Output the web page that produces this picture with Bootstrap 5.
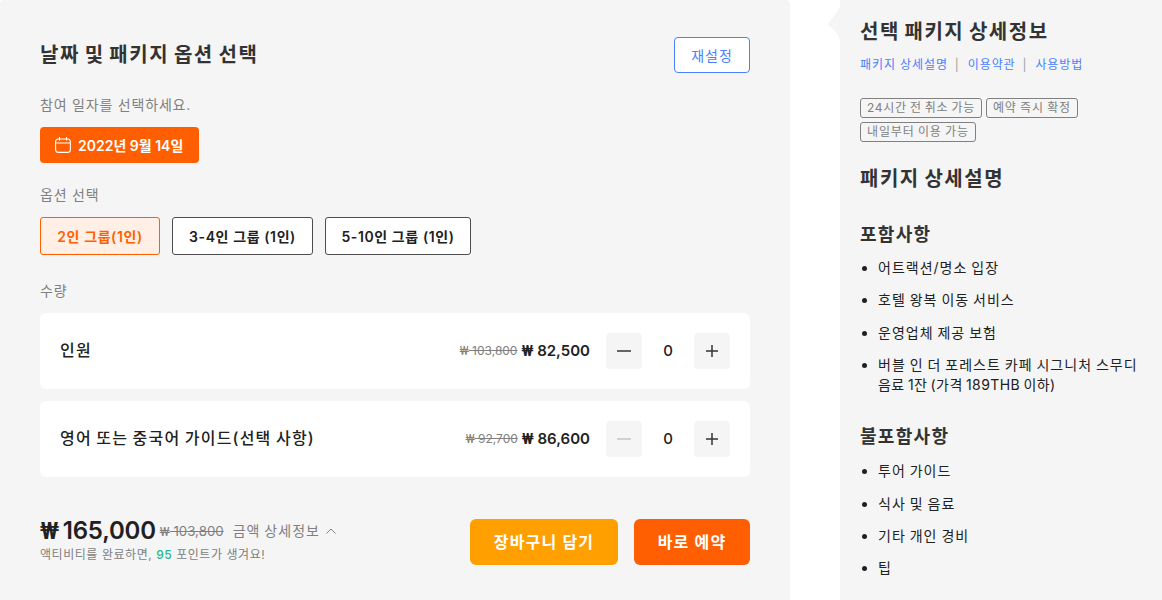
<!DOCTYPE html>
<html lang="ko">
<head>
<meta charset="utf-8">
<title>패키지 옵션</title>
<link rel="stylesheet" href="https://cdn.jsdelivr.net/npm/bootstrap@5.3.0/dist/css/bootstrap.min.css">
<style>
html,body{height:600px;overflow:hidden;background:#fff}
body{font-family:Inter,"Noto Sans CJK KR",sans-serif;color:#212121}
.page-wrap{width:1162px;height:600px;gap:50px;overflow:hidden}
.left-panel{width:790px;height:640px;background:#f5f5f5;border-radius:4px;padding:37px 40px 0;flex:none}
.right-panel{width:322px;height:600px;background:#f5f5f5;padding:19px 20px 0;position:relative;flex:none}
.notch{position:absolute;left:-13px;top:0;width:14px;height:46px;display:block}
.won{font-family:Roboto,sans-serif}
.title-main{font-size:20px;font-weight:700;line-height:36px;margin:0;color:#333;letter-spacing:1.5px;word-spacing:-1.4px}
.reset-btn{width:76px;height:36px;font-size:14px;color:#4a80ff;border:1px solid #4a80ff;background:#fff;border-radius:4px;padding:0;letter-spacing:1px}
.label-text{font-size:14px;line-height:20px;color:#808080;letter-spacing:.8px}
.date-label{margin-top:22px}
.date-btn{height:36px;width:159px;margin-top:12px;background:#ff5f00;color:#fff;border:0;border-radius:4px;font-size:14px;font-weight:600;padding:0 0 0 15px;gap:7px}
.opt-label{margin-top:22px}
.opt-row{margin-top:12px;gap:12px}
.opt-btn{height:38px;background:#fff;border:1px solid #4d4d4d;border-radius:3px;font-size:14px;font-weight:600;color:#212121;padding:0;letter-spacing:.6px}
.opt-active{background:#ffefe5;border-color:#ff5f00;color:#ff5f00}
.opt-a{width:120px}.opt-b{width:141px}.opt-c{width:146px}
.qty-label{margin-top:26px;margin-bottom:12px}
.qty-row{height:76px;background:#fff;border-radius:6px;padding:0 20px}
.qty-gap{margin-top:12px}
.qty-name{font-size:16px;font-weight:500;color:#212121;position:relative;top:-1px;letter-spacing:1.2px;word-spacing:-1px}
.price-old{font-size:12px;color:#808080;text-decoration:line-through}
.price-now{font-size:15px;font-weight:600;color:#212121;margin-left:4px}
.step-btn{width:36px;height:36px;background:#f5f5f5;border:0;border-radius:4px;padding:0}
.step-btn svg{display:block;margin:auto}
.qty-val{width:52px;text-align:center;font-size:15px;font-weight:500;line-height:35px;height:36px}
.foot-row{margin-top:42px;height:46px}
.foot-left{padding-bottom:2px}
.total-line{line-height:24px;height:24px}
.total-now{font-size:24px;font-weight:600;line-height:24px;color:#212121;word-spacing:-2px;letter-spacing:-.2px}
.total-old{font-size:13.3px;color:#808080;text-decoration:line-through;margin-left:4px}
.total-link{font-size:14px;color:#808080;margin-left:9px;letter-spacing:1px;word-spacing:-1px}
.total-link svg{margin-left:5px}
.point-note{font-size:12px;line-height:16px;color:#808080;margin-top:4px;letter-spacing:.55px}
.point-val{color:#1fb88a;font-weight:500}
.cart-btn,.buy-btn{height:46px;border:0;border-radius:6px;color:#fff;font-size:16px;font-weight:700;padding:0;letter-spacing:1.2px}
.cart-btn{width:148px;background:#ff9f00}
.buy-btn{width:116px;background:#ff5f00}
.title-side{font-size:20px;font-weight:700;line-height:26px;color:#333;margin:0;letter-spacing:1.5px;word-spacing:-1.5px}
.side-links{font-size:12px;line-height:18px;margin-top:11px;color:#a0a0a0;letter-spacing:.9px}
.side-links a{color:#4a80ff;text-decoration:none}
.side-links i{font-style:normal;margin:0 8px 0 7px}
.tag-wrap{margin-top:24px;gap:4px;width:260px}
.tag-item{font-size:12px;line-height:18px;height:20px;color:#808080;border:1px solid #808080;border-radius:3px;padding:0 6px;white-space:nowrap;letter-spacing:.85px;word-spacing:-.85px}
.tag-item:first-child{letter-spacing:.68px}
.sub-title{font-size:20px;font-weight:700;line-height:26px;color:#333;margin:24px 0 0;letter-spacing:1.5px;word-spacing:-1.5px}
.incl-title{font-size:18px;font-weight:700;line-height:26px;color:#333;margin:30px 0 10px;letter-spacing:1.3px;word-spacing:-1.3px}
.incl-title.second{margin:29px 0 11px}
.incl-list{font-size:14px;line-height:20px;color:#212121;margin:0;padding-left:18px;letter-spacing:1px;word-spacing:-1px}
.incl-list li{margin-bottom:12.4px}
.line-two{letter-spacing:.4px}
</style>
</head>
<body>
<div class="page-wrap d-flex">
  <section class="left-panel">
    <div class="d-flex justify-content-between align-items-center">
      <h2 class="title-main">날짜 및 패키지 옵션 선택</h2>
      <button class="reset-btn" type="button">재설정</button>
    </div>
    <div class="label-text date-label">참여 일자를 선택하세요.</div>
    <button class="date-btn d-flex align-items-center" type="button">
      <svg width="16" height="16" viewBox="0 0 16 16" fill="none" stroke="#fff" stroke-width="1.1"><rect x=".6" y="2" width="14.8" height="13.4" rx="3"/><path d="M.6 6h14.8M4.500 0v3.400M11.500 0v3.400"/></svg>
      <span>2022년 9월 14일</span>
    </button>
    <div class="label-text opt-label">옵션 선택</div>
    <div class="d-flex opt-row">
      <button class="opt-btn opt-active opt-a" type="button">2인 그룹(1인)</button>
      <button class="opt-btn opt-b" type="button">3-4인 그룹 (1인)</button>
      <button class="opt-btn opt-c" type="button">5-10인 그룹 (1인)</button>
    </div>
    <div class="label-text qty-label">수량</div>
    <div class="qty-row d-flex align-items-center justify-content-between">
      <span class="qty-name">인원</span>
      <div class="d-flex align-items-center">
        <span class="price-old"><span class="won">₩</span> 103,800</span><span class="price-now"><span class="won">₩</span> 82,500</span>
        <div class="d-flex align-items-center ms-3">
          <button class="step-btn" type="button"><svg width="14" height="14" viewBox="0 0 14 14"><path d="M0 7h14" stroke="#333" stroke-width="1.5"/></svg></button>
          <span class="qty-val">0</span>
          <button class="step-btn" type="button"><svg width="14" height="14" viewBox="0 0 14 14"><path d="M1 7h12M7 1v12" stroke="#333" stroke-width="1.5"/></svg></button>
        </div>
      </div>
    </div>
    <div class="qty-row qty-gap d-flex align-items-center justify-content-between">
      <span class="qty-name">영어 또는 중국어 가이드(선택 사항)</span>
      <div class="d-flex align-items-center">
        <span class="price-old"><span class="won">₩</span> 92,700</span><span class="price-now"><span class="won">₩</span> 86,600</span>
        <div class="d-flex align-items-center ms-3">
          <button class="step-btn" type="button"><svg width="14" height="14" viewBox="0 0 14 14"><path d="M0 7h14" stroke="#c4c4c4" stroke-width="1.5"/></svg></button>
          <span class="qty-val">0</span>
          <button class="step-btn" type="button"><svg width="14" height="14" viewBox="0 0 14 14"><path d="M1 7h12M7 1v12" stroke="#333" stroke-width="1.5"/></svg></button>
        </div>
      </div>
    </div>
    <div class="d-flex justify-content-between align-items-center foot-row">
      <div class="foot-left">
        <div class="d-flex align-items-center total-line">
          <span class="total-now"><span class="won">₩</span> 165,000</span>
          <span class="total-old"><span class="won">₩</span> 103,800</span>
          <span class="total-link d-flex align-items-center">금액 상세정보<svg width="12" height="12" viewBox="0 0 12 12" fill="none" stroke="#808080" stroke-width="1"><path d="M1.500 8.500L6 4l4.500 4.500"/></svg></span>
        </div>
        <div class="point-note">액티비티를 완료하면, <span class="point-val">95</span> 포인트가 생겨요!</div>
      </div>
      <div class="d-flex gap-3">
        <button class="cart-btn" type="button">장바구니 담기</button>
        <button class="buy-btn" type="button">바로 예약</button>
      </div>
    </div>
  </section>
  <aside class="right-panel">
    <svg class="notch" viewBox="0 0 14 46"><path d="M14 0C13.500 8 11 12 1.500 23Q.5 24 1.500 25C8 31 13 35 13.500 44L14 46z" fill="#f5f5f5"/></svg>
    <h3 class="title-side">선택 패키지 상세정보</h3>
    <div class="side-links"><a href="#">패키지 상세설명</a><i>|</i><a href="#">이용약관</a><i>|</i><a href="#">사용방법</a></div>
    <div class="tag-wrap d-flex flex-wrap">
      <span class="tag-item">24시간 전 취소 가능</span>
      <span class="tag-item">예약 즉시 확정</span>
      <span class="tag-item">내일부터 이용 가능</span>
    </div>
    <h4 class="sub-title">패키지 상세설명</h4>
    <h4 class="incl-title">포함사항</h4>
    <ul class="incl-list">
      <li>어트랙션/명소 입장</li>
      <li>호텔 왕복 이동 서비스</li>
      <li>운영업체 제공 보험</li>
      <li>버블 인 더 포레스트 카페 시그니처 스무디 <span class="d-block line-two">음료 1잔 (가격 189THB 이하)</span></li>
    </ul>
    <h4 class="incl-title second">불포함사항</h4>
    <ul class="incl-list">
      <li>투어 가이드</li>
      <li>식사 및 음료</li>
      <li>기타 개인 경비</li>
      <li>팁</li>
    </ul>
  </aside>
</div>
</body>
</html>
